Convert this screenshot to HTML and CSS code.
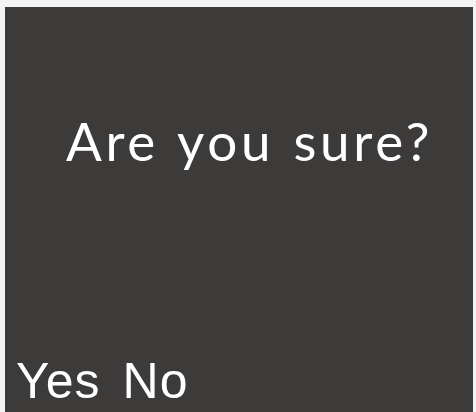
FILE: index.html
```html
<!DOCTYPE html>
<html lang="en">
<head>
    <meta charset="UTF-8">
    <meta name="viewport" content="width=device-width, initial-scale=1.0">
    <title>Confirm</title>
    <link rel="stylesheet" href="styles.css">
</head>
<body>
    <div class="dialog">
        <p class="question">Are you sure?</p>
        <div class="actions">
            <span class="choice">Yes</span>
            <span class="choice">No</span>
        </div>
    </div>
</body>
</html>
```

FILE: styles.css
```css
* {
    margin: 0;
    padding: 0;
    box-sizing: border-box;
}

html, body {
    height: 100%;
}

body {
    background: #f3f3f3;
    padding: 7px 3px 0 5px;
    overflow: hidden;
}

.dialog {
    height: 100%;
    background: #3d3a3a;
    color: #ffffff;
    display: flex;
    flex-direction: column;
    padding: 0 0 0 11px;
}

.question {
    font-family: Lato, "Open Sans", sans-serif;
    font-size: 53px;
    letter-spacing: 3.7px;
    word-spacing: 2px;
    text-align: center;
    margin-top: 102px;
    padding-left: 10px;
}

.actions {
    margin-top: auto;
    display: flex;
    gap: 22px;
    font-family: "Liberation Sans", Arial, sans-serif;
    font-size: 50px;
    letter-spacing: 1px;
    line-height: 1;
    padding-bottom: 6px;
}
```
